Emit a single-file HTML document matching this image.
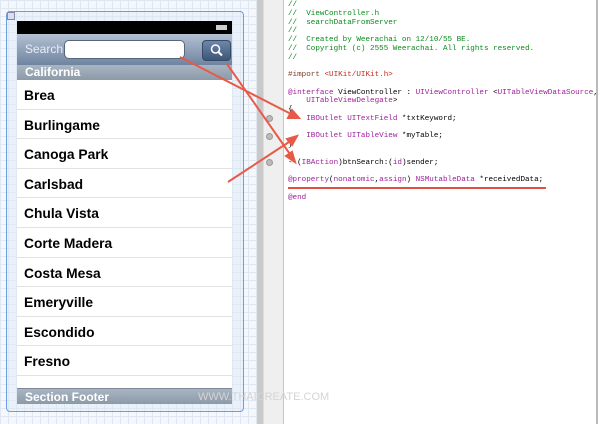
<!DOCTYPE html>
<html><head><meta charset="utf-8"><style>
body{margin:0;width:600px;height:424px;overflow:hidden;position:relative;font-family:"Liberation Sans",sans-serif;background:#fff}
.grid{position:absolute;left:0;top:0;width:257px;height:424px;background-color:#f4f7fb;background-image:linear-gradient(#dfe7f2 1px,transparent 1px),linear-gradient(90deg,#dfe7f2 1px,transparent 1px);background-size:8px 8px}
.frame{position:absolute;left:6px;top:11px;width:236px;height:399px;border:1.5px solid #6a9fe0;border-radius:4px;background:rgba(220,232,248,.4)}
.phone{position:absolute;left:17px;top:21px;width:215px;height:383px;background:#fff;overflow:hidden}
.status{height:13px;background:#000}
.nav{height:31px;background:linear-gradient(#b3c1d2,#6f84a0);position:relative}
.nav .lbl{position:absolute;left:8px;top:8px;color:#e8edf3;font-size:12px}
.nav .tf{position:absolute;left:47px;top:6px;width:119px;height:17px;background:#fff;border-radius:5px;border:1px solid #55667d}
.nav .btn{position:absolute;left:185px;top:6px;width:27px;height:19px;border-radius:4px;background:linear-gradient(#6e87a9,#3c5679);border:1px solid #354a66}
.sec{height:15px;background:linear-gradient(#a9b5c2,#8c99a8);color:#fff;font-weight:bold;font-size:12px;line-height:15px;padding-left:8px}
.row{height:29.6px;border-bottom:1px solid #e2e2e2;box-sizing:border-box;font-weight:bold;font-size:13.8px;line-height:31px;padding-left:7px;color:#000}
.foot{position:absolute;left:0;top:367px;width:215px;height:16px;background:linear-gradient(#a9b5c2,#8c99a8);color:#fff;font-weight:bold;font-size:12px;line-height:16px;padding-left:8px;box-sizing:border-box;border-top:1px solid #7e8a98}
.bar1{position:absolute;left:257px;top:0;width:6px;height:424px;background:#c9c9c9}
.bar2{position:absolute;left:263px;top:0;width:19px;height:424px;background:#efefef;border-left:1px solid #ddd;border-right:1px solid #c8c8c8}
.dot{position:absolute;left:266px;width:5px;height:5px;border-radius:50%;background:#bbb;border:1px solid #999}
.code{position:absolute;left:288px;top:1px;font-family:"Liberation Mono",monospace;font-size:7.6px;line-height:8.75px;white-space:pre;color:#000}
.c{color:#0a8a1e}.k{color:#a0209c}.s{color:#c32a1c}.m{color:#7a3d2a}
.rbar{position:absolute;left:596px;top:0;width:2px;height:424px;background:#bbb}
.wm{position:absolute;left:198px;top:391px;font-size:11px;color:#d4d4d4;letter-spacing:0}
</style></head><body>
<div class="grid"></div>
<div class="frame"></div>
<div style="position:absolute;left:7px;top:12px;width:6px;height:6px;border:1px solid #88a;background:#dde"></div>
<div class="phone">
<div class="status"><div style="position:absolute;right:5px;top:4px;width:11px;height:5px;background:#ccc"></div></div>
<div class="nav"><span class="lbl">Search</span><div class="tf"></div><div class="btn"><svg width="27" height="19" viewBox="0 0 27 19"><circle cx="12.5" cy="8" r="4" fill="none" stroke="#fff" stroke-width="1.5"/><path d="M15.5 11 L19 14.5" stroke="#fff" stroke-width="2"/></svg></div></div>
<div class="sec">California</div>
<div class="row">Brea</div><div class="row">Burlingame</div><div class="row">Canoga Park</div><div class="row">Carlsbad</div><div class="row">Chula Vista</div><div class="row">Corte Madera</div><div class="row">Costa Mesa</div><div class="row">Emeryville</div><div class="row">Escondido</div><div class="row">Fresno</div>
<div class="foot">Section Footer</div>
</div>
<div class="bar1"></div><div class="bar2"></div>
<div class="dot" style="top:115px"></div><div class="dot" style="top:133px"></div><div class="dot" style="top:159px"></div>
<div class="code"><span class="c">//
//  ViewController.h
//  searchDataFromServer
//
//  Created by Weerachai on 12/10/55 BE.
//  Copyright (c) 2555 Weerachai. All rights reserved.
//</span>

<span class="m">#import </span><span class="s">&lt;UIKit/UIKit.h&gt;</span>

<span class="k">@interface</span> ViewController : <span class="k">UIViewController</span> &lt;<span class="k">UITableViewDataSource</span>,
    <span class="k">UITableViewDelegate</span>&gt;
{
    <span class="k">IBOutlet UITextField</span> *txtKeyword;

    <span class="k">IBOutlet UITableView</span> *myTable;
}

- (<span class="k">IBAction</span>)btnSearch:(<span class="k">id</span>)sender;

<span class="k">@property</span>(<span class="k">nonatomic</span>,<span class="k">assign</span>) <span class="k">NSMutableData</span> *receivedData;

<span class="k">@end</span></div>
<div style="position:absolute;left:288px;top:187px;width:258px;height:1.5px;background:#e05040"></div>
<div class="rbar"></div>
<div class="wm">WWW.THAICREATE.COM</div>
<svg style="position:absolute;left:0;top:0" width="600" height="424">
<g stroke="#e85a48" stroke-width="2" fill="#e85a48">
<line x1="180" y1="57" x2="293" y2="115"/><polygon points="299,118 288,118 292,110"/>
<line x1="227" y1="64" x2="292" y2="157"/><polygon points="295,162 286,156 292,152"/>
<line x1="228" y1="182" x2="292" y2="140"/><polygon points="297,136 292,145 287,139"/>
</g></svg>
</body></html>
